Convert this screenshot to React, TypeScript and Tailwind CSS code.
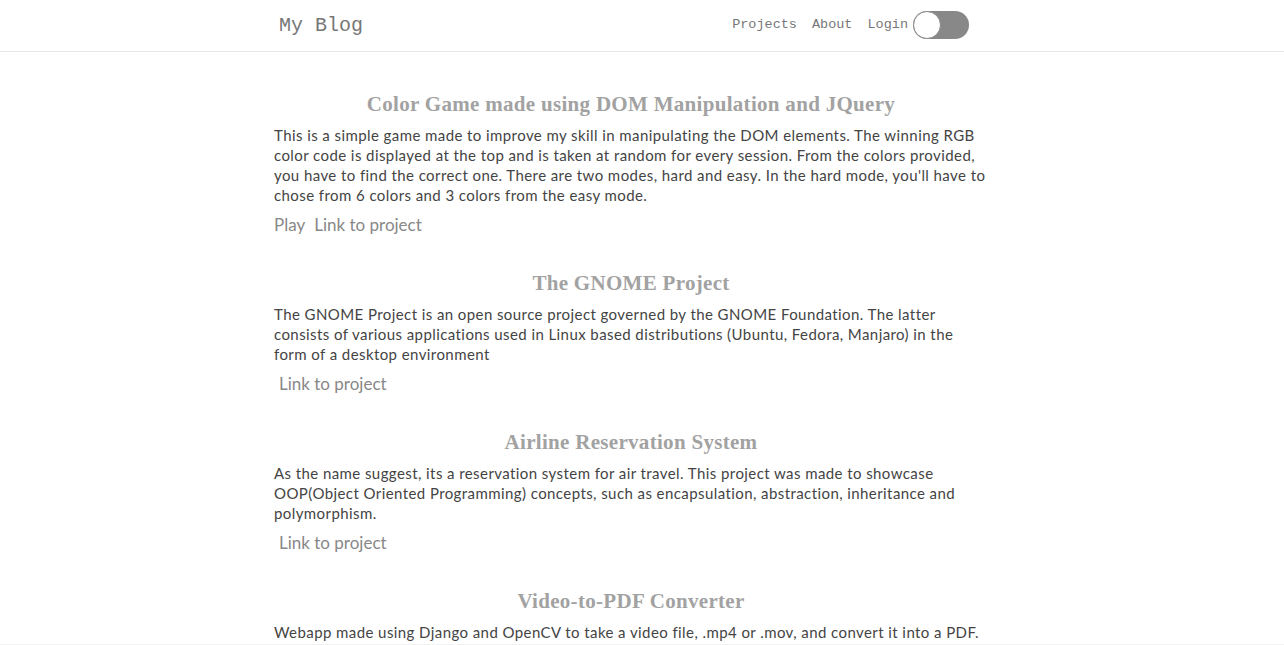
import React from "react";

const projects = [
  {
    title: "Color Game made using DOM Manipulation and JQuery",
    body: "This is a simple game made to improve my skill in manipulating the DOM elements. The winning RGB color code is displayed at the top and is taken at random for every session. From the colors provided, you have to find the correct one. There are two modes, hard and easy. In the hard mode, you'll have to chose from 6 colors and 3 colors from the easy mode.",
    play: true,
  },
  {
    title: "The GNOME Project",
    body: "The GNOME Project is an open source project governed by the GNOME Foundation. The latter consists of various applications used in Linux based distributions (Ubuntu, Fedora, Manjaro) in the form of a desktop environment",
    play: false,
  },
  {
    title: "Airline Reservation System",
    body: "As the name suggest, its a reservation system for air travel. This project was made to showcase OOP(Object Oriented Programming) concepts, such as encapsulation, abstraction, inheritance and polymorphism.",
    play: false,
  },
  {
    title: "Video-to-PDF Converter",
    body: "Webapp made using Django and OpenCV to take a video file, .mp4 or .mov, and convert it into a PDF.",
    play: false,
  },
];

export default function App() {
  return (
    <div className="h-[645px] overflow-hidden flex flex-col bg-white">
      {/* Navbar */}
      <header className="h-[52px] shrink-0 border-b border-[#e6e6e6]">
        <div className="ml-[279px] w-[690px] h-full flex items-center justify-between font-['Liberation_Mono',monospace] text-[#777]">
          <span className="text-[20px] pt-[1px]">My Blog</span>
          <nav className="flex items-center text-[13.5px]">
            <a className="mr-[15px]">Projects</a>
            <a className="mr-[15px]">About</a>
            <a className="mr-[5px]">Login</a>
            <div className="relative w-[56px] h-[28px] rounded-full bg-[#888] -mt-[2px]">
              <div className="absolute left-0 top-0 w-[28px] h-[28px] rounded-full bg-white border border-[#888]" />
            </div>
          </nav>
        </div>
      </header>

      {/* Projects */}
      <main className="flex-1 overflow-hidden">
        <div className="ml-[274px] w-[714px] pt-[39px] font-['Lato',sans-serif]">
          {projects.map((p) => (
            <section key={p.title} className="mb-[35px]">
              <h2 className="text-center font-['Liberation_Serif',serif] font-bold text-[21px] leading-[26px] text-[#a2a2a2] tracking-[0.3px]">
                {p.title}
              </h2>
              <p className="mt-[8px] text-[15px] leading-[20px] text-[#444] tracking-[0.42px]">{p.body}</p>
              <div className="mt-[10px] flex text-[17px] leading-[20px] text-[#888]">
                {p.play ? <a className="mr-[9px]">Play</a> : <span className="w-[5px]" />}
                <a>Link to project</a>
              </div>
            </section>
          ))}
        </div>
      </main>
      <footer className="h-[1px] shrink-0 bg-[#f2f2f2]" />
    </div>
  );
}
